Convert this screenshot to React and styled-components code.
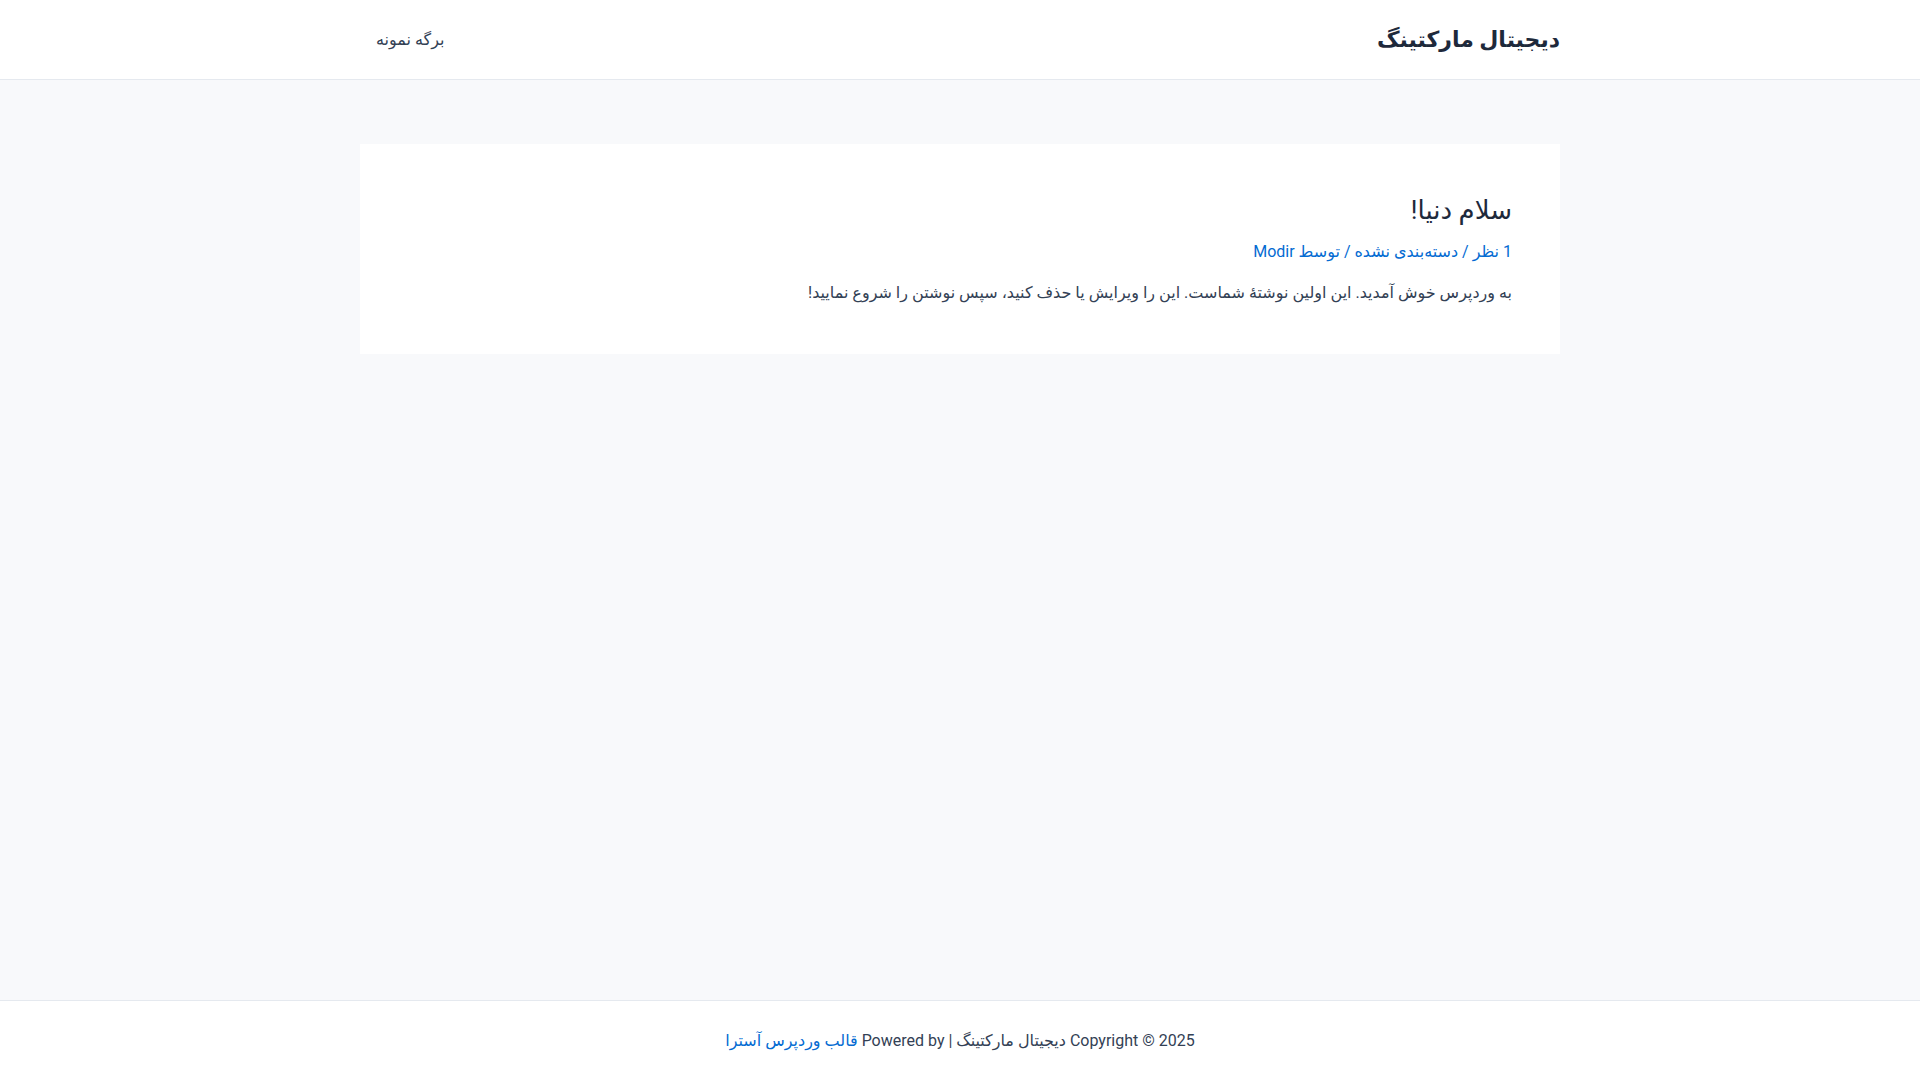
import React from "react";
import styled, {createGlobalStyle} from "styled-components";

const GlobalStyle = createGlobalStyle`
  html, body {
    margin: 0;
    padding: 0;
  }
  body {
    background: #f8f9fb;
    font-family: Roboto, "DejaVu Sans", sans-serif;
    color: #334155;
  }
`;

const Page = styled.div`
  direction: rtl;
  min-height: 100vh;
  display: flex;
  flex-direction: column;
`;

const Header = styled.header`
  background: #fff;
  border-bottom: 1px solid #e5e9ef;
  height: 79px;
  display: flex;
  justify-content: center;
`;

const Container = styled.div`
  width: 1200px;
  display: flex;
  align-items: center;
  justify-content: space-between;
`;

const SiteTitle = styled.a`
  font-size: 22px;
  font-weight: 700;
  color: #1e293b;
  text-decoration: none;
`;

const MenuItem = styled.a`
  font-size: 16px;
  color: #334155;
  text-decoration: none;
  padding: 0 16px;
`;

const Main = styled.main`
  flex: 1;
  display: flex;
  justify-content: center;
  padding-top: 64px;
`;

const Card = styled.article`
  width: 1200px;
  box-sizing: border-box;
  align-self: flex-start;
  background: #fff;
  padding: 48px;
`;

const Title = styled.h2`
  margin: 0;
  font-size: 26px;
  font-weight: 400;
  line-height: 1.4;
  color: #1e293b;
`;

const Meta = styled.div`
  margin-top: 11px;
  font-size: 16px;
  line-height: 1.6;
  color: #046bd2;
`;

const Link = styled.a`
  color: #046bd2;
  text-decoration: none;
`;

const Body = styled.p`
  margin: 14px 0 0;
  font-size: 16px;
  line-height: 1.7;
  color: #334155;
`;

const Footer = styled.footer`
  background: #fff;
  border-top: 1px solid #e5e9ef;
  height: 79px;
  display: flex;
  align-items: center;
  justify-content: center;
  font-size: 16px;
  color: #334155;
`;

export default function App() {
  return (
    <Page>
      <GlobalStyle/>
      <Header>
        <Container>
          <SiteTitle href="#">دیجیتال مارکتینگ</SiteTitle>
          <MenuItem href="#">برگه نمونه</MenuItem>
        </Container>
      </Header>
      <Main>
        <Card>
          <Title>سلام دنیا!</Title>
          <Meta>
            <Link href="#">1 نظر</Link> / <Link href="#">دسته‌بندی نشده</Link> / توسط <Link href="#">Modir</Link>
          </Meta>
          <Body>به وردپرس خوش آمدید. این اولین نوشتهٔ شماست. این را ویرایش یا حذف کنید، سپس نوشتن را شروع نمایید!</Body>
        </Card>
      </Main>
      <Footer>
        <span>
          Copyright © 2025 دیجیتال مارکتینگ | Powered by <Link href="#">قالب وردپرس آسترا</Link>
        </span>
      </Footer>
    </Page>
  );
}
